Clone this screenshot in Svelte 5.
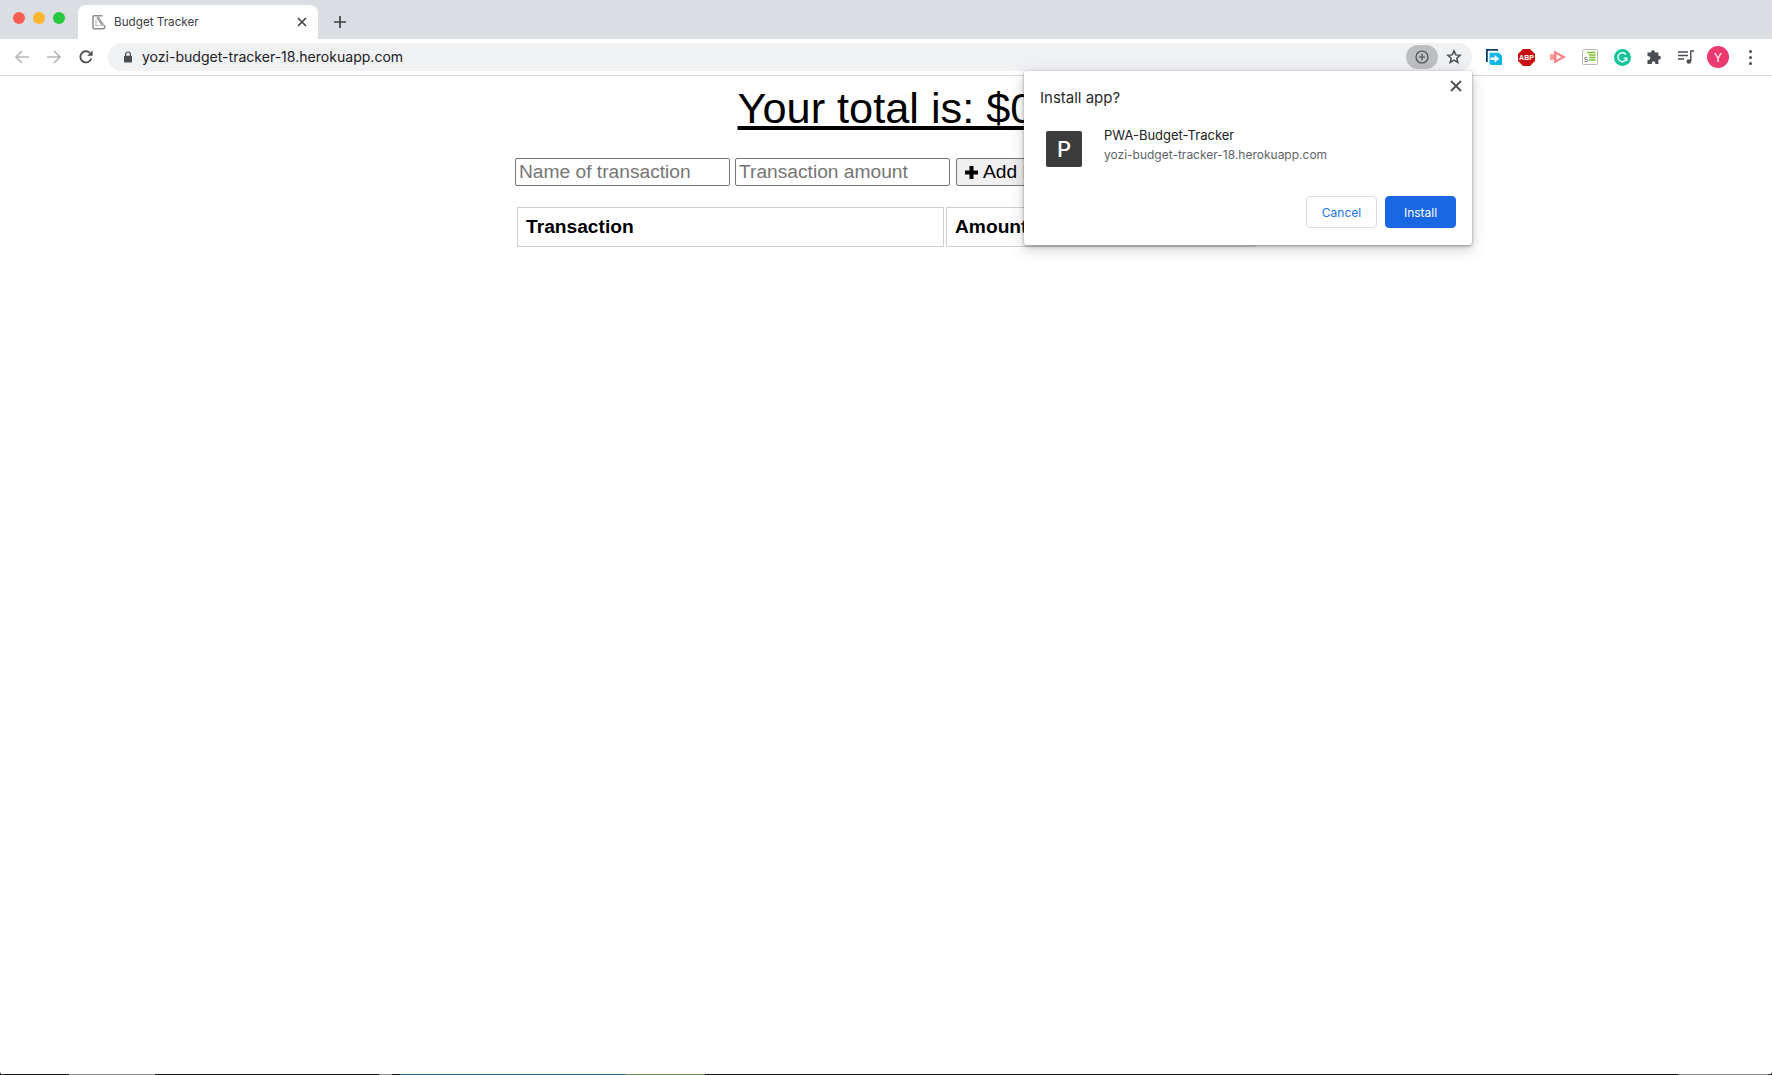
<script lang="ts">
  const host = 'yozi-budget-tracker-18.herokuapp.com';
</script>

<div class="window">
  <header class="chrome">
    <div class="tabstrip">
      <div class="lights">
        <span class="light red"></span>
        <span class="light yellow"></span>
        <span class="light green"></span>
      </div>
      <div class="tab">
        <svg class="favicon" width="16" height="16" viewBox="0 0 16 16" fill="none">
          <path d="M11.500 1.700H3a1 1 0 0 0-1 1v11a1 1 0 0 0 1 1h9.500a1 1 0 0 0 1-1V11" stroke="#8c8c8c" stroke-width="1.500" />
          <path d="M6.500 3l5.500 8.500" stroke="#a8a8a8" stroke-width="3" />
          <path d="M5 5.500v6h4" stroke="#bdbdbd" stroke-width="1.200" />
        </svg>
        <span class="tabTitle">Budget Tracker</span>
        <svg class="tabClose" width="10" height="10" viewBox="0 0 10 10" stroke="#3c4043" stroke-width="1.600">
          <path d="M1 1l8 8M9 1l-8 8" />
        </svg>
      </div>
      <svg class="newTab" width="14" height="14" viewBox="0 0 14 14" stroke="#3c4043" stroke-width="1.700">
        <path d="M7 1v12M1 7h12" />
      </svg>
    </div>

    <div class="toolbar">
      <div class="navBtns">
        <span class="slot">
          <svg width="16" height="16" viewBox="0 0 16 16" fill="none" stroke="#b4b6b9" stroke-width="1.700">
            <path d="M15 8H2M8 2L2 8l6 6" />
          </svg>
        </span>
        <span class="slot">
          <svg width="16" height="16" viewBox="0 0 16 16" fill="none" stroke="#b4b6b9" stroke-width="1.700">
            <path d="M1 8h13M8 2l6 6-6 6" />
          </svg>
        </span>
        <span class="slot">
          <svg width="16" height="16" viewBox="0 0 16 16" fill="none">
            <path d="M13.300 9.400A5.600 5.600 0 1 1 11.800 3.800" stroke="#4a4d51" stroke-width="1.800" />
            <path d="M14.600 1.400v5.400H9.200z" fill="#4a4d51" />
          </svg>
        </span>
      </div>

      <div class="omnibox">
        <svg class="lock" width="10" height="12" viewBox="0 0 10 12">
          <path d="M2.600 5V3.400a2.400 2.400 0 0 1 4.800 0V5" fill="none" stroke="#4a4d51" stroke-width="1.200" />
          <rect x="1" y="4.800" width="8" height="6.600" rx="0.800" fill="#4a4d51" />
        </svg>
        <span class="url">{host}</span>
        <span class="installPill">
          <svg width="14" height="14" viewBox="0 0 14 14" fill="none" stroke="#4a4d51" stroke-width="1.200">
            <circle cx="7" cy="7" r="6" />
            <path d="M7 3.800v6.400M3.800 7h6.400" />
          </svg>
        </span>
        <svg class="star" width="16" height="16" viewBox="0 0 16 16" fill="none" stroke="#4a4d51" stroke-width="1.500">
          <path d="M8 1.900l1.800 4 4.300.4-3.300 2.900 1 4.200L8 11.200l-3.800 2.200 1-4.200-3.300-2.900 4.300-.4z" />
        </svg>
      </div>

      <div class="extensions">
        <span class="slot">
          <svg width="16" height="16" viewBox="0 0 16 16">
            <path d="M12 .9H.9v12" fill="none" stroke="#123f66" stroke-width="1.800" />
            <path d="M3.500 3.800h9.500l3 3v9.200H5.500a2 2 0 0 1-2-2z" fill="#12b5e5" />
            <path d="M4.500 8.500h4.200V6l4.500 3.700-4.500 3.700v-2.400H4.500z" fill="#fff" />
          </svg>
        </span>
        <span class="slot">
          <svg width="17" height="17" viewBox="0 0 17 17">
            <path d="M5 0h7l5 5v7l-5 5H5l-5-5V5z" fill="#c70d0d" />
            <text x="8.500" y="11.300" class="abp">ABP</text>
          </svg>
        </span>
        <span class="slot">
          <svg width="16" height="14" viewBox="0 0 16 14">
            <path d="M0 4.200h4V9.800H0z" fill="#fb9a9a" />
            <path d="M4 0.500l12 6.500L4 13.500z" fill="#fb8080" />
            <path d="M6.500 4.300L11.500 7 6.500 9.700z" fill="#fff" />
          </svg>
        </span>
        <span class="slot">
          <svg width="16" height="16" viewBox="0 0 16 16">
            <rect x="0.500" y="0.500" width="15" height="15" rx="1" fill="#fafafa" stroke="#b9b9b9" />
            <path d="M5 3.500h8.500M7 6h6.500M7 8.500h6.500M7 11h6.500" stroke="#7cc42c" stroke-width="1.300" />
            <text x="4" y="12.800" class="five">5</text>
          </svg>
        </span>
        <span class="slot">
          <svg width="17" height="17" viewBox="0 0 16 16" fill="none">
            <circle cx="8" cy="8" r="8" fill="#15c39a" />
            <path d="M11.300 5.300A4.200 4.200 0 1 0 12 8.600H9M12 8.600v2.600" stroke="#fff" stroke-width="1.300" />
          </svg>
        </span>
        <span class="slot">
          <svg width="16" height="16" viewBox="0 0 16 16">
            <path d="M5.200 2.600a1.900 1.900 0 0 1 3.700 0V3.400h3.500v3.400h.6a1.900 1.900 0 0 1 0 3.800h-.6V15H9.300v-1a1.700 1.700 0 0 0-3.400 0v1H1.500v-4h1a1.900 1.900 0 0 0 0-3.800h-1V3.400h3.700z" fill="#4a4d51" />
          </svg>
        </span>
        <span class="slot">
          <svg width="16" height="14" viewBox="0 0 16 14" fill="none" stroke="#4a4d51" stroke-width="1.400">
            <path d="M0 2h10M0 5.500h10M0 9h6" />
            <path d="M12.800 11.500V1H16" />
            <circle cx="10.800" cy="11.500" r="1.600" fill="#4a4d51" />
          </svg>
        </span>
        <span class="slot"><span class="avatar">Y</span></span>
        <span class="slot">
          <span class="dots"><i></i><i></i><i></i></span>
        </span>
      </div>
    </div>
  </header>

  <main class="page">
    <h1 class="total">Your total is: $0</h1>
    <form class="entry">
      <input type="text" placeholder="Name of transaction" />
      <input type="text" placeholder="Transaction amount" />
      <button type="button" class="fund">
        <svg width="15" height="15" viewBox="0 0 15 15"><path d="M5.500 1h4v4.500H14v4H9.500V14h-4V9.500H1v-4h4.500z" /></svg>
        Add Funds
      </button>
    </form>
    <table class="ledger">
      <thead>
        <tr>
          <th class="nameCol">Transaction</th>
          <th>Amount</th>
        </tr>
      </thead>
    </table>
  </main>

  <!-- a sliver of the desktop shows under the window -->
  <div class="desktop">
    <span class="seg gray1"></span>
    <span class="seg gray2"></span>
    <span class="seg blue"></span>
    <span class="seg olive"></span>
    <span class="seg rest"></span>
    <span class="seg gray3"></span>
  </div>

  <section class="dialog" aria-label="Install app">
    <svg class="dialogClose" width="12" height="12" viewBox="0 0 12 12" stroke="#4a4d51" stroke-width="1.800">
      <path d="M1 1l10 10M11 1L1 11" />
    </svg>
    <h2>Install app?</h2>
    <div class="appRow">
      <div class="appIcon">P</div>
      <div class="appText">
        <div class="appName">PWA-Budget-Tracker</div>
        <div class="appHost">{host}</div>
      </div>
    </div>
    <div class="actions">
      <button type="button" class="btn cancel">Cancel</button>
      <button type="button" class="btn install">Install</button>
    </div>
  </section>
</div>

<style>
  :global(body) {
    margin: 0;
    background: #1a1a1a;
  }

  .window {
    position: relative;
    height: 1075px;
    display: flex;
    flex-direction: column;
    overflow: hidden;
    background: #fff;
    border-radius: 0 0 4px 4px;
    font-family: Inter, "Liberation Sans", sans-serif;
  }

  .chrome {
    flex: none;
  }

  .tabstrip {
    height: 39px;
    background: #dadde2;
    display: flex;
    align-items: flex-end;
  }

  .lights {
    display: flex;
    gap: 8px;
    width: 78px;
    padding: 0 0 15px 13px;
    box-sizing: border-box;
  }
  .light {
    width: 12px;
    height: 12px;
    border-radius: 50%;
  }
  .red {
    background: #fb5b55;
  }
  .yellow {
    background: #fdb72d;
  }
  .green {
    background: #27c740;
  }

  .tab {
    width: 240px;
    height: 34px;
    background: #fff;
    border-radius: 8px 8px 0 0;
    display: flex;
    align-items: center;
    padding: 0 11px 0 13px;
    box-sizing: border-box;
    gap: 7px;
  }
  .tabTitle {
    flex: 1;
    font-size: 11.700px;
    color: #3c4043;
  }
  .newTab {
    margin: 0 0 10px 15px;
  }

  .toolbar {
    height: 36px;
    background: #fff;
    border-bottom: 1px solid #d6d7d9;
    display: flex;
    align-items: center;
    padding: 0 6px;
  }

  .navBtns,
  .extensions {
    display: flex;
    flex: none;
  }

  .slot {
    width: 32px;
    height: 32px;
    display: flex;
    align-items: center;
    justify-content: center;
  }

  .omnibox {
    flex: 1;
    height: 28px;
    margin: 0 6px;
    background: #f0f1f3;
    border-radius: 14px;
    display: flex;
    align-items: center;
    padding: 0 10px 0 15px;
  }
  .url {
    flex: 1;
    margin: -2px 0 0 9px;
    font-size: 14.050px;
    color: #202124;
  }
  .installPill {
    width: 32px;
    height: 24px;
    border-radius: 12px;
    background: #bdbec0;
    display: flex;
    align-items: center;
    justify-content: center;
    margin-right: 8px;
  }

  .abp {
    font: bold 7px "Liberation Sans", sans-serif;
    fill: #fff;
    text-anchor: middle;
  }
  .five {
    font: 7px "Liberation Mono", monospace;
    fill: #555;
    text-anchor: middle;
  }

  .avatar {
    width: 22px;
    height: 22px;
    border-radius: 50%;
    background: #ec3a70;
    color: #fff;
    font-size: 12px;
    display: flex;
    align-items: center;
    justify-content: center;
  }
  .dots {
    display: flex;
    flex-direction: column;
    gap: 3px;
  }
  .dots i {
    width: 3px;
    height: 3px;
    border-radius: 50%;
    background: #4a4d51;
  }

  .page {
    flex: 1;
    width: 742px;
    margin: 0 auto;
    font-family: "Liberation Sans", Arial, sans-serif;
    color: #000;
  }

  .total {
    margin: 0;
    padding-top: 8px;
    font-size: 43.300px;
    line-height: 48px;
    font-weight: 400;
    text-align: center;
    text-decoration: underline;
  }

  .entry {
    margin-top: 26px;
    display: flex;
    gap: 5px;
    white-space: nowrap;
  }
  .entry input {
    width: 215px;
    height: 28px;
    box-sizing: border-box;
    padding: 0 3px 1px;
    border: 1px solid #767676;
    border-radius: 2px;
    font: 19.200px "Liberation Sans", Arial, sans-serif;
    background: #fff;
  }
  .entry input::placeholder {
    color: #757575;
  }
  .fund {
    height: 28px;
    margin-left: 1px;
    padding: 0 7px;
    border: 1px solid #767676;
    border-radius: 2px;
    background: #efefef;
    font: 19.200px "Liberation Sans", Arial, sans-serif;
    display: flex;
    align-items: center;
    gap: 4px;
    flex: none;
  }

  .ledger {
    width: 742px;
    margin-top: 19px;
    border-collapse: separate;
    border-spacing: 2px;
    table-layout: fixed;
  }
  .ledger th {
    height: 40px;
    box-sizing: border-box;
    padding: 0 8px;
    border: 1px solid #cfcfcf;
    font-size: 19.200px;
    font-weight: 700;
    text-align: left;
  }
  .nameCol {
    width: 427px;
  }

  .desktop {
    flex: none;
    height: 1px;
    background: #151515;
    display: flex;
  }
  .seg {
    height: 1px;
    display: block;
  }
  .gray1 {
    width: 86px;
    margin-left: 69px;
    background: #8a8a8a;
  }
  .gray2 {
    width: 13px;
    margin-left: 224px;
    background: #8f8f8f;
  }
  .blue {
    width: 225px;
    margin-left: 8px;
    background: #1f5f8b;
  }
  .olive {
    width: 80px;
    background: #5f8a4a;
  }
  .rest {
    flex: 1;
  }
  .gray3 {
    width: 90px;
    margin-right: 4px;
    background: #8a8a8a;
  }

  .dialog {
    position: absolute;
    top: 71px;
    left: 1024px;
    width: 448px;
    height: 174px;
    box-sizing: border-box;
    padding: 17px 16px 17px;
    background: #fff;
    border-radius: 3px;
    box-shadow: 0 1px 3px rgba(60, 64, 67, 0.5), 0 4px 14px rgba(60, 64, 67, 0.28);
    display: flex;
    flex-direction: column;
  }
  .dialogClose {
    position: absolute;
    top: 9px;
    right: 10px;
  }
  .dialog h2 {
    margin: 0;
    font-size: 15px;
    line-height: 20px;
    font-weight: 400;
    color: #292a2d;
  }
  .appRow {
    margin-top: 23px;
    margin-left: 6px;
    display: flex;
    align-items: flex-start;
    gap: 22px;
  }
  .appIcon {
    width: 36px;
    height: 36px;
    border-radius: 2px;
    background: #3c3c3c;
    color: #fff;
    font-size: 22px;
    font-weight: 500;
    display: flex;
    align-items: center;
    justify-content: center;
  }
  .appName {
    margin-top: -6px;
    font-size: 13px;
    line-height: 20px;
    color: #202124;
  }
  .appHost {
    margin-top: 1px;
    font-size: 12px;
    line-height: 18px;
    color: #5f6368;
  }
  .actions {
    margin-top: auto;
    display: flex;
    justify-content: flex-end;
    gap: 8px;
  }
  .btn {
    width: 71px;
    height: 32px;
    border-radius: 4px;
    font: 12px Inter, "Liberation Sans", sans-serif;
    padding: 0;
  }
  .cancel {
    background: #fff;
    border: 1px solid #dadce0;
    color: #1a73e8;
  }
  .install {
    background: #1a67e3;
    border: 1px solid #1a67e3;
    color: #fff;
  }
</style>
